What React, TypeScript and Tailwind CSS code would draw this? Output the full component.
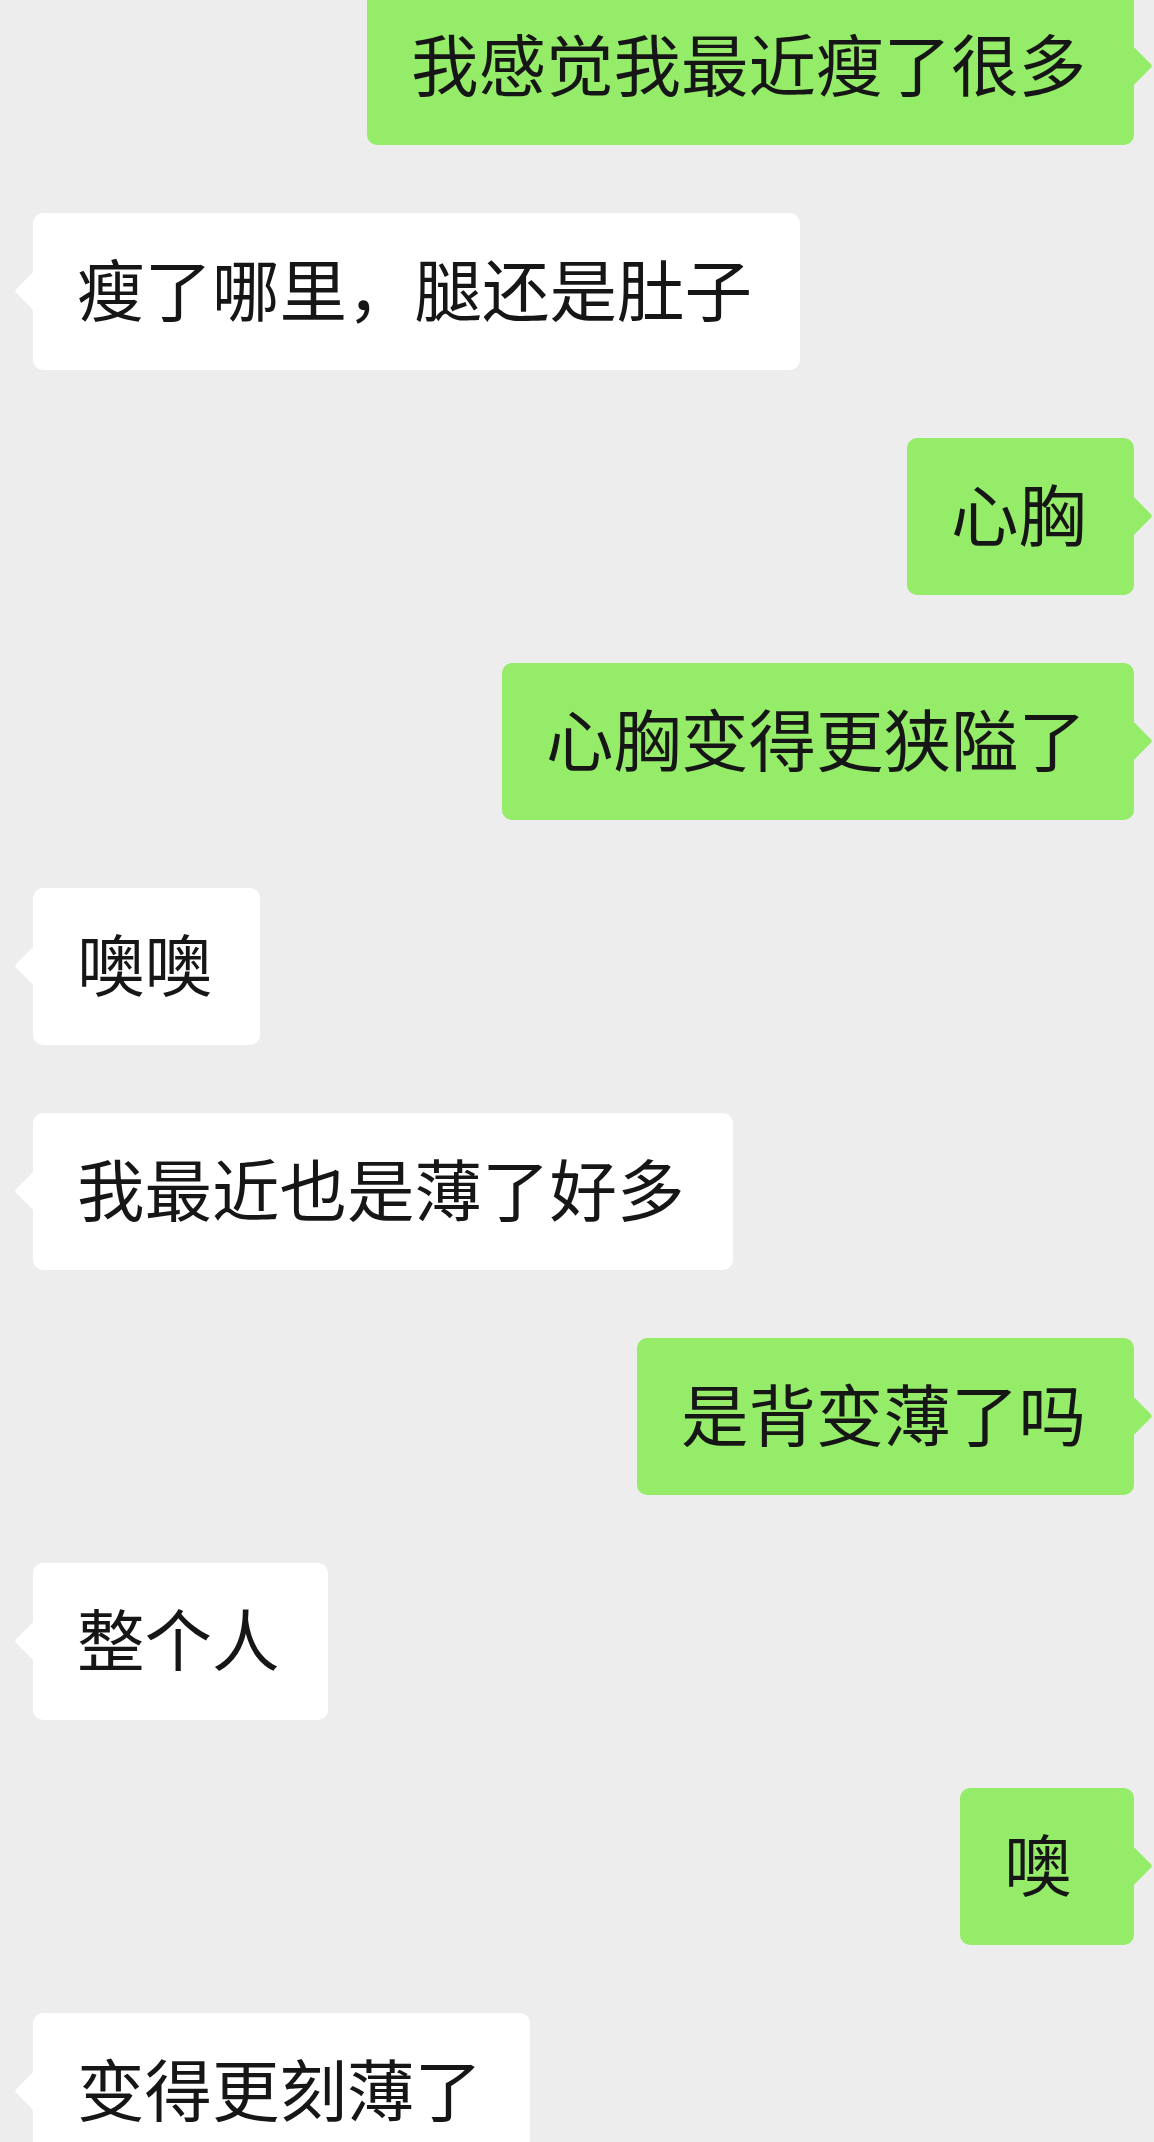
type Msg = { side: 'me' | 'them'; text: string }

const MESSAGES: Msg[] = [
  { side: 'me', text: '我感觉我最近瘦了很多' },
  { side: 'them', text: '瘦了哪里，腿还是肚子' },
  { side: 'me', text: '心胸' },
  { side: 'me', text: '心胸变得更狭隘了' },
  { side: 'them', text: '噢噢' },
  { side: 'them', text: '我最近也是薄了好多' },
  { side: 'me', text: '是背变薄了吗' },
  { side: 'them', text: '整个人' },
  { side: 'me', text: '噢' },
  { side: 'them', text: '变得更刻薄了' },
]

function Bubble({ msg }: { msg: Msg }) {
  const mine = msg.side === 'me'
  return (
    <div className={`relative flex h-[157px] min-w-[174px] items-center rounded-[10px] pb-[10px] pl-[44px] pr-[48px] ${mine ? 'self-end bg-[#95ec69]' : 'self-start bg-white'}`}>
      <span
        className={`absolute top-[64px] h-[28px] w-[28px] rotate-45 rounded-[3px] ${mine ? 'right-[-13px] bg-[#95ec69]' : 'left-[-13px] bg-white'}`}
      />
      <span className="relative whitespace-nowrap font-['Noto_Sans_CJK_SC',sans-serif] text-[67.5px] leading-none text-[#161616]">
        {msg.text}
      </span>
    </div>
  )
}

export default function App() {
  return (
    <div className="h-[2142px] w-full overflow-hidden bg-[#ededed]">
      <div className="-mt-[12px] flex flex-col gap-[68px] pl-[33px] pr-[20px]">
        {MESSAGES.map((m, i) => (
          <Bubble key={i} msg={m} />
        ))}
      </div>
    </div>
  )
}
